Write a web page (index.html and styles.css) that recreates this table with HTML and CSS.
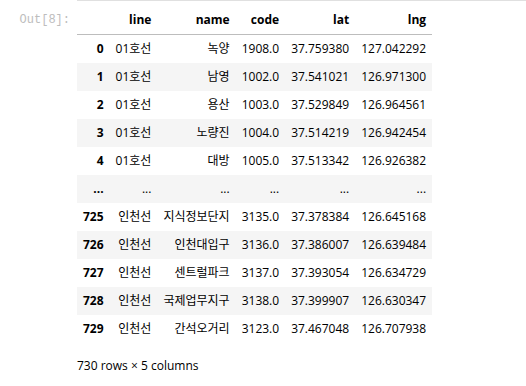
FILE: index.html
```html
<!DOCTYPE html>
<html lang="en">
<head>
    <meta charset="UTF-8">
    <title>Out[8]</title>
    <link rel="stylesheet" href="styles.css">
</head>
<body>

<div class="output">
    <div class="prompt">Out[8]:</div>
    <div class="output-area">
        <table class="dataframe">
            <thead>
                <tr>
                    <th></th>
                    <th>line</th>
                    <th>name</th>
                    <th>code</th>
                    <th>lat</th>
                    <th>lng</th>
                </tr>
            </thead>
            <tbody>
                <tr><th>0</th><td>01호선</td><td>녹양</td><td>1908.0</td><td>37.759380</td><td>127.042292</td></tr>
                <tr><th>1</th><td>01호선</td><td>남영</td><td>1002.0</td><td>37.541021</td><td>126.971300</td></tr>
                <tr><th>2</th><td>01호선</td><td>용산</td><td>1003.0</td><td>37.529849</td><td>126.964561</td></tr>
                <tr><th>3</th><td>01호선</td><td>노량진</td><td>1004.0</td><td>37.514219</td><td>126.942454</td></tr>
                <tr><th>4</th><td>01호선</td><td>대방</td><td>1005.0</td><td>37.513342</td><td>126.926382</td></tr>
                <tr><th>...</th><td>...</td><td>...</td><td>...</td><td>...</td><td>...</td></tr>
                <tr><th>725</th><td>인천선</td><td>지식정보단지</td><td>3135.0</td><td>37.378384</td><td>126.645168</td></tr>
                <tr><th>726</th><td>인천선</td><td>인천대입구</td><td>3136.0</td><td>37.386007</td><td>126.639484</td></tr>
                <tr><th>727</th><td>인천선</td><td>센트럴파크</td><td>3137.0</td><td>37.393054</td><td>126.634729</td></tr>
                <tr><th>728</th><td>인천선</td><td>국제업무지구</td><td>3138.0</td><td>37.399907</td><td>126.630347</td></tr>
                <tr><th>729</th><td>인천선</td><td>간석오거리</td><td>3123.0</td><td>37.467048</td><td>126.707938</td></tr>
            </tbody>
        </table>
        <p class="shape">730 rows × 5 columns</p>
    </div>
</div>

</body>
</html>
```

FILE: styles.css
```css
body {
    font-family: "Open Sans", "Noto Sans CJK KR", sans-serif;
    font-size: 12px;
    color: #000;
    margin: 0;
    background: #fff;
}
.output {
    display: flex;
}
.prompt {
    width: 70px;
    padding-right: 7px;
    padding-top: 12px;
    text-align: right;
    font-family: "Liberation Mono", monospace;
    font-size: 12px;
    line-height: 16px;
    color: #bdbdbd;
}
.output-area {
    flex: 1;
    border-top: 1px solid #e0e0e0;
}
.dataframe {
    border-collapse: collapse;
    border-spacing: 0;
    margin-top: 5px;
}
.dataframe th,
.dataframe td {
    padding: 6px;
    line-height: 16px;
    text-align: right;
    vertical-align: middle;
    white-space: nowrap;
}
.dataframe th {
    font-weight: bold;
}
.dataframe thead th {
    border-bottom: 1px solid #bdbdbd;
}
.dataframe tbody tr:nth-child(even) {
    background: #f5f5f5;
}
.shape {
    margin: 15px 0 0;
    line-height: 16px;
}
```
